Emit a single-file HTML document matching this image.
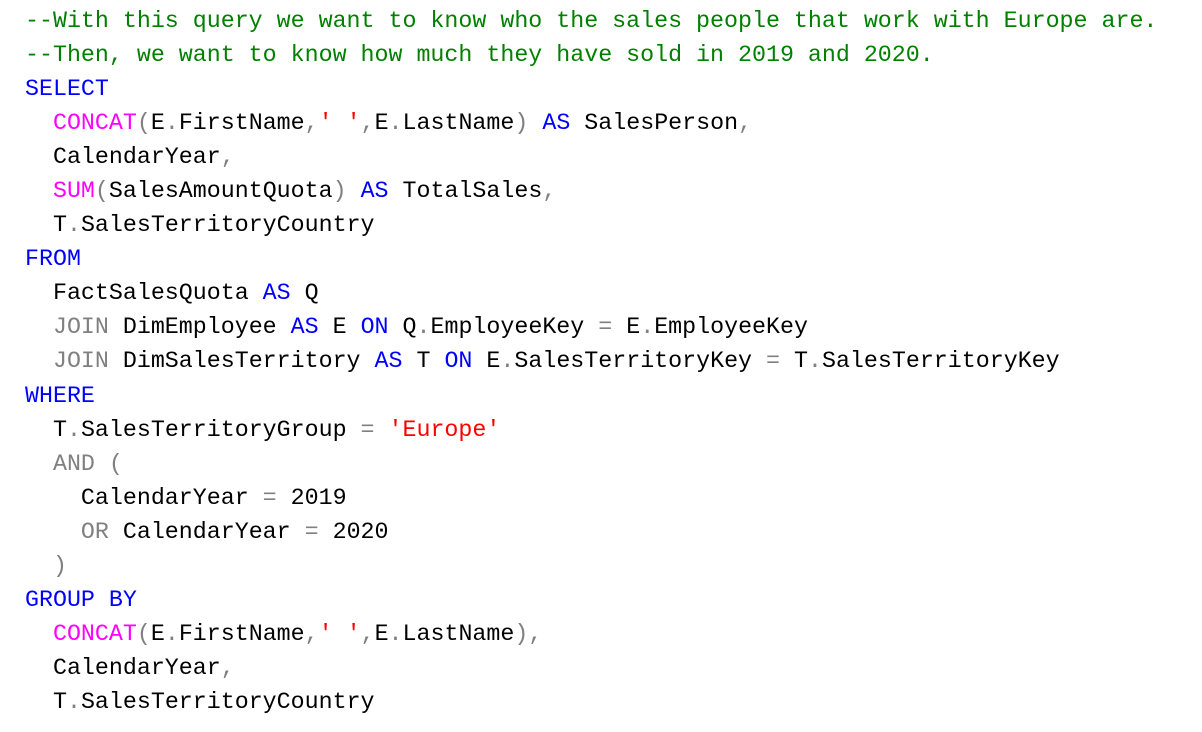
<!DOCTYPE html>
<html><head><meta charset="utf-8"><style>
html,body{margin:0;padding:0;background:#fff;width:1202px;height:732px;overflow:hidden}
pre{margin:0;position:absolute;left:25px;top:4px;font-family:"Liberation Mono",monospace;font-size:23.3px;line-height:34.05px;color:#000}
.c{color:#008000}.k{color:#0000ff}.f{color:#ff00ff}.g{color:#808080}.s{color:#ff0000}
</style></head><body><pre><span class="c">--With this query we want to know who the sales people that work with Europe are.</span>
<span class="c">--Then, we want to know how much they have sold in 2019 and 2020.</span>
<span class="k">SELECT</span>
  <span class="f">CONCAT</span><span class="g">(</span>E<span class="g">.</span>FirstName<span class="g">,</span><span class="s">' '</span><span class="g">,</span>E<span class="g">.</span>LastName<span class="g">)</span> <span class="k">AS</span> SalesPerson<span class="g">,</span>
  CalendarYear<span class="g">,</span>
  <span class="f">SUM</span><span class="g">(</span>SalesAmountQuota<span class="g">)</span> <span class="k">AS</span> TotalSales<span class="g">,</span>
  T<span class="g">.</span>SalesTerritoryCountry
<span class="k">FROM</span>
  FactSalesQuota <span class="k">AS</span> Q
  <span class="g">JOIN</span> DimEmployee <span class="k">AS</span> E <span class="k">ON</span> Q<span class="g">.</span>EmployeeKey <span class="g">=</span> E<span class="g">.</span>EmployeeKey
  <span class="g">JOIN</span> DimSalesTerritory <span class="k">AS</span> T <span class="k">ON</span> E<span class="g">.</span>SalesTerritoryKey <span class="g">=</span> T<span class="g">.</span>SalesTerritoryKey
<span class="k">WHERE</span>
  T<span class="g">.</span>SalesTerritoryGroup <span class="g">=</span> <span class="s">'Europe'</span>
  <span class="g">AND (</span>
    CalendarYear <span class="g">=</span> 2019
    <span class="g">OR</span> CalendarYear <span class="g">=</span> 2020
  <span class="g">)</span>
<span class="k">GROUP BY</span>
  <span class="f">CONCAT</span><span class="g">(</span>E<span class="g">.</span>FirstName<span class="g">,</span><span class="s">' '</span><span class="g">,</span>E<span class="g">.</span>LastName<span class="g">),</span>
  CalendarYear<span class="g">,</span>
  T<span class="g">.</span>SalesTerritoryCountry</pre></body></html>
